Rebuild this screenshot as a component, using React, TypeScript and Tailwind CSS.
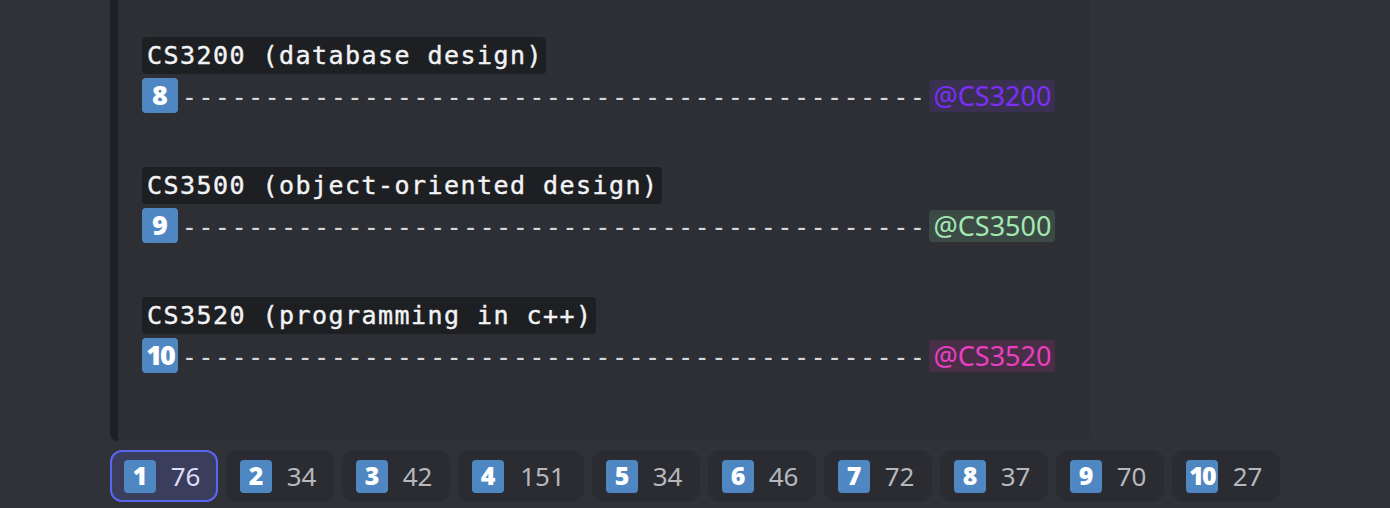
import React from "react";

const groups = [
  { code: "CS3200 (database design)", n: "8", role: "@CS3200", color: "text-[#7b2ff7]", bg: "bg-[#3a3150]" },
  { code: "CS3500 (object-oriented design)", n: "9", role: "@CS3500", color: "text-[#a3e8b0]", bg: "bg-[#3c4a46]" },
  { code: "CS3520 (programming in c++)", n: "10", role: "@CS3520", color: "text-[#eb3fc3]", bg: "bg-[#482f47]" },
];

const reactions = [
  { n: "1", c: "76", sel: true },
  { n: "2", c: "34" },
  { n: "3", c: "42" },
  { n: "4", c: "151" },
  { n: "5", c: "34" },
  { n: "6", c: "46" },
  { n: "7", c: "72" },
  { n: "8", c: "37" },
  { n: "9", c: "70" },
  { n: "10", c: "27" },
];

const sans = { fontFamily: '"Noto Sans", "Open Sans", sans-serif' };

function Keycap({ n, big }: { n: string; big?: boolean }) {
  return (
    <span
      className={
        "flex flex-none items-center justify-center rounded-[4px] bg-[#4f87c3] font-black text-white " +
        (big ? "h-[35px] w-[36px] text-[27px]" : "h-[33px] w-[32px] text-[25px]") +
        (n.length > 1 ? " tracking-[-2px]" : "")
      }
      style={{ fontFamily: '"Noto Sans", sans-serif' }}
    >
      {n}
    </span>
  );
}

export default function App() {
  const dashes = "-".repeat(45);
  return (
    <div className="h-[508px] w-[1390px] overflow-hidden bg-[#313238] pl-[110px]" style={sans}>
      <div className="h-[441px] w-[980px] rounded-b-[8px] border-l-[8px] border-[#1f2023] bg-[#2e2f35] pl-[24px] pt-[37px]">
        {groups.map((g, i) => (
          <div key={i} className={i > 0 ? "mt-[54px]" : ""}>
            <div className="flex">
              <span
                className="flex h-[37px] items-center rounded-[4px] bg-[#1e1f22] pl-[5px] pr-[3px] text-[25px] tracking-[1.45px] text-[#f2f3f5] [-webkit-text-stroke:0.4px_#f2f3f5]"
                style={{ fontFamily: '"DejaVu Sans Mono", monospace' }}
              >
                {g.code}
              </span>
            </div>
            <div className="mt-[4px] flex h-[35px] items-center">
              <Keycap n={g.n} big />
              <span className="ml-[7px] text-[27px] leading-none tracking-[7.85px] text-[#d4d6da]">{dashes}</span>
              <span
                className={
                  "flex h-[32px] items-center rounded-[4px] px-[4px] text-[27px] leading-none " + g.color + " " + g.bg
                }
              >
                {g.role}
              </span>
            </div>
          </div>
        ))}
      </div>
      <div className="mt-[9px] flex gap-[8px]">
        {reactions.map((r, i) => (
          <div
            key={i}
            className={
              "flex h-[52px] items-center rounded-[12px] border-[2px] pl-[12px] " +
              (r.c.length > 2 ? "w-[126px] " : "w-[108px] ") +
              (r.sel ? "border-[#5865f2] bg-[#3b3d5d]" : "border-transparent bg-[#2b2c31]")
            }
          >
            <Keycap n={r.n} />
            <span
              className={
                "flex-1 pr-[1px] text-center text-[26px] leading-none " +
                (r.sel ? "text-[#dcdef5]" : "text-[#b5b8bd]")
              }
            >
              {r.c}
            </span>
          </div>
        ))}
      </div>
    </div>
  );
}
